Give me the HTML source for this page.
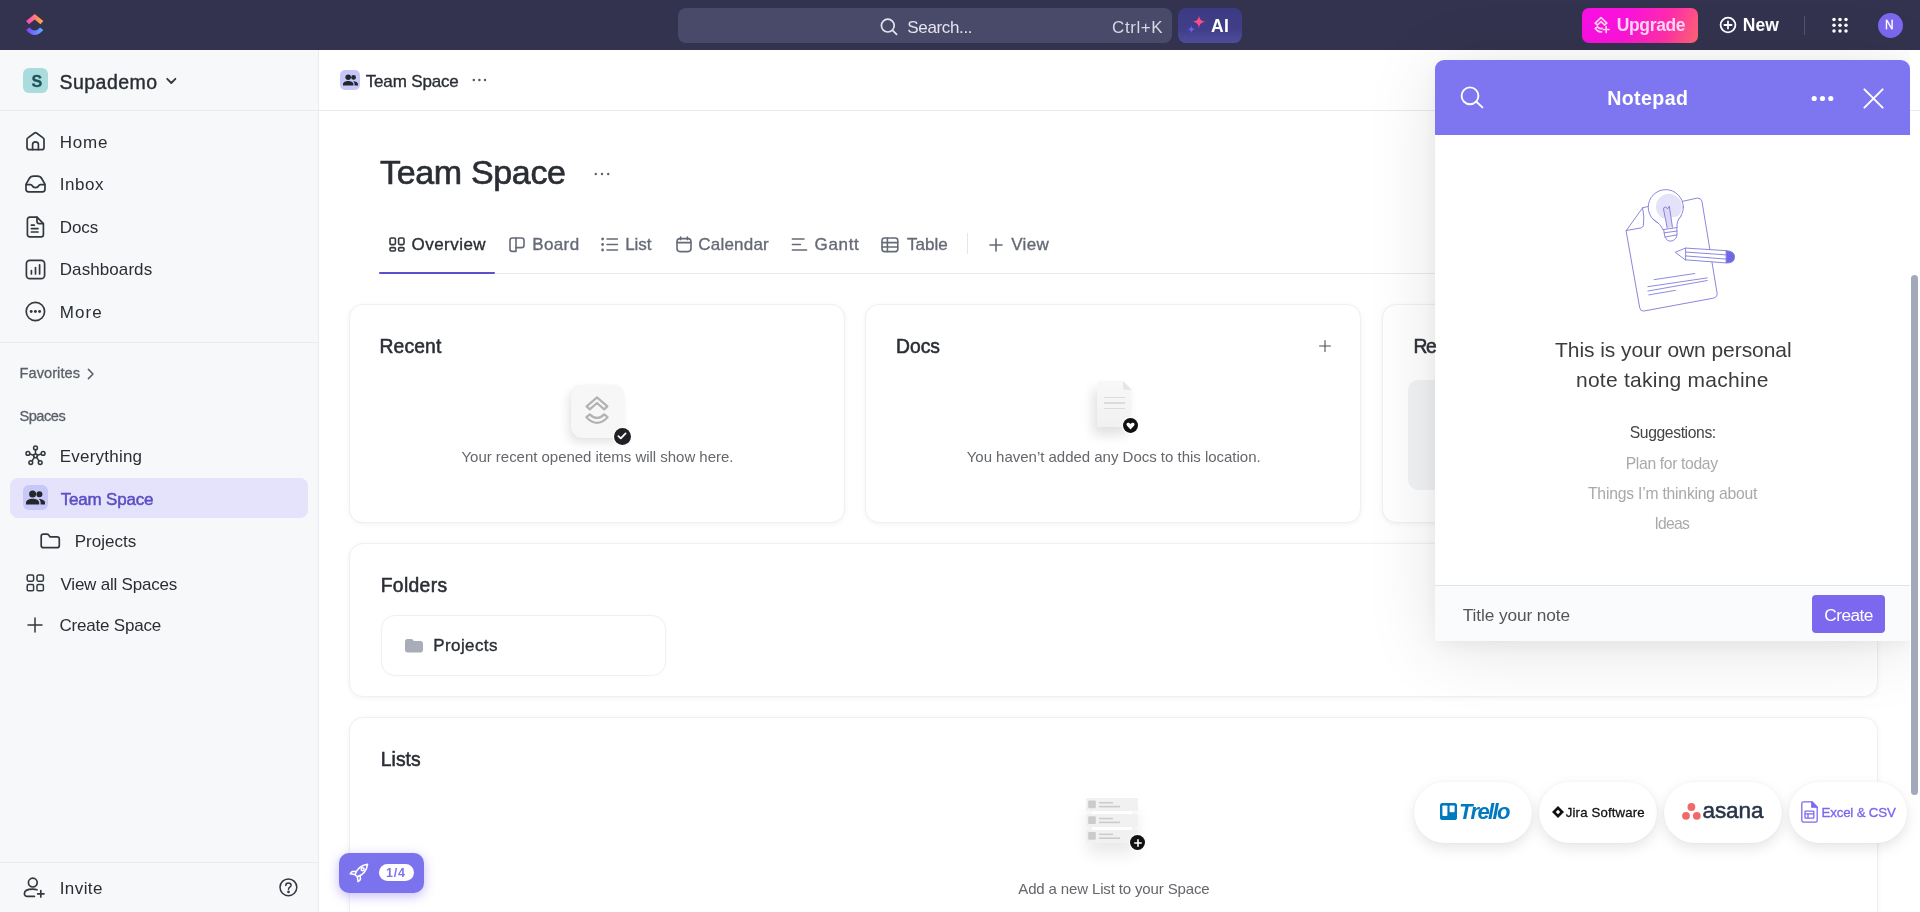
<!DOCTYPE html>
<html lang="en"><head><meta charset="utf-8"><title>Team Space</title>
<style>
*{box-sizing:border-box}
html,body{margin:0;padding:0}
body{width:1920px;height:912px;overflow:hidden;position:relative;background:#fff;font-family:"Liberation Sans",sans-serif;}
.a{position:absolute}
.t{position:absolute;line-height:1;white-space:nowrap}
svg{position:absolute;overflow:visible}
.ic{fill:none;stroke:#33373e;stroke-width:1.7;stroke-linecap:round;stroke-linejoin:round}
.ig{fill:none;stroke:#646a76;stroke-width:1.6;stroke-linecap:round;stroke-linejoin:round}
.card{position:absolute;background:#fff;border:1px solid #f0f0f2;border-radius:14px;box-shadow:0 1px 5px rgba(0,0,0,.055)}
.pill{position:absolute;top:782px;width:118px;height:61px;border-radius:31px;background:#fff;box-shadow:0 5px 14px rgba(0,0,0,.10),0 0 3px rgba(0,0,0,.04)}
</style></head><body>

<!-- ===== main area base ===== -->
<div class="a" style="left:319px;top:50px;width:1601px;height:862px;background:#fff"></div>
<div class="a" style="left:319px;top:110px;width:1601px;height:1px;background:#e9ebf0"></div>
<div class="a" style="left:379px;top:273px;width:1500px;height:1px;background:#e9ebf0"></div>
<div class="a" style="left:379px;top:271.6px;width:116px;height:2.7px;background:#5b4fd0;border-radius:1px"></div>
<div class="a" style="left:967px;top:233px;width:1px;height:21px;background:#e4e6ea"></div>

<!-- cards -->
<div class="card" style="left:349px;top:304px;width:496px;height:219px"></div>
<div class="card" style="left:865px;top:304px;width:496px;height:219px"></div>
<div class="card" style="left:1382px;top:304px;width:496px;height:219px"></div>
<div class="a" style="left:1408px;top:380px;width:444px;height:110px;background:#f2f3f5;border-radius:10px"></div>
<div class="card" style="left:349px;top:543px;width:1529px;height:154px"></div>
<div class="a" style="left:380.5px;top:614.5px;width:285px;height:61px;border:1px solid #f0f0f2;border-radius:14px;background:#fff;box-shadow:0 0 3px rgba(0,0,0,.025)"></div>
<div class="card" style="left:349px;top:717px;width:1529px;height:260px"></div>

<!-- ===== topbar ===== -->
<div class="a" style="left:0;top:0;width:1920px;height:50px;background:#33334f"></div>
<svg style="left:24px;top:12px" width="22" height="25" viewBox="24 12 22 25">
 <defs>
  <linearGradient id="lg1" x1="0" y1="0" x2="1" y2="0"><stop offset="0" stop-color="#ff3ec8"/><stop offset="1" stop-color="#ffb52e"/></linearGradient>
  <linearGradient id="lg2" x1="0" y1="0" x2="1" y2="0"><stop offset="0" stop-color="#8b3dfc"/><stop offset="1" stop-color="#55b4ff"/></linearGradient>
 </defs>
 <path d="M26.1 20.9 L34.7 14 L43.3 20.9 L40.5 24.2 L34.7 19.4 L28.9 24.2 Z" fill="url(#lg1)"/>
 <path d="M26.1 30 L29.4 27.4 Q34.7 33.6 40 27.4 L43.3 30 Q34.7 40 26.1 30 Z" fill="url(#lg2)"/>
</svg>
<div class="a" style="left:678px;top:8px;width:494px;height:35px;border-radius:8px;background:#49496a"></div>
<svg style="left:880px;top:18px" width="18" height="18" viewBox="0 0 18 18"><circle cx="7.8" cy="7.6" r="6.4" fill="none" stroke="#e4e4ee" stroke-width="1.7"/><path d="M12.6 12.4 L16.6 16.4" stroke="#e4e4ee" stroke-width="1.7" stroke-linecap="round"/></svg>
<div class="a" style="left:1178px;top:8px;width:64px;height:35px;border-radius:8px;background:linear-gradient(180deg,#3c3a82 0%,#403e88 60%,#504c9c 100%)"></div>
<svg style="left:1187px;top:15px" width="20" height="19" viewBox="0 0 20 19">
 <defs><linearGradient id="lg3" x1="0" y1="1" x2="1" y2="0"><stop offset="0" stop-color="#ff3ad0"/><stop offset="1" stop-color="#ff5a4a"/></linearGradient></defs>
 <path d="M12 0.5 C12.6 4.6 14 6 18.6 6.8 C14 7.6 12.6 9 12 13.2 C11.4 9 10 7.6 5.4 6.8 C10 6 11.4 4.6 12 0.5Z" fill="url(#lg3)"/>
 <path d="M4.4 10.5 C4.8 13 5.6 13.8 8.2 14.3 C5.6 14.8 4.8 15.6 4.4 18.2 C4 15.6 3.2 14.8 0.6 14.3 C3.2 13.8 4 13 4.4 10.5Z" fill="#6a5cf0"/>
</svg>
<div class="a" style="left:1582px;top:8px;width:116px;height:35px;border-radius:7px;background:linear-gradient(112deg,#f90fe6 0%,#fb14d8 40%,#ff2fa8 72%,#ff6872 100%)"></div>
<svg style="left:1593px;top:16px" width="18" height="18" viewBox="0 0 18 18" fill="none" stroke="#ffd3f3" stroke-width="1.7" stroke-linecap="round" stroke-linejoin="round">
 <path d="M2.2 7.2 L8 1.6 L13.8 7.2 L11.6 9 L8 5.6 L4.4 9 Z"/>
 <path d="M2.4 12.4 L4.6 10.8 Q6.6 13.6 9 12.2"/><path d="M2.4 12.4 Q5 16.6 8.6 15.8"/>
 <path d="M13.2 10.6 V16.4 M10.3 13.5 H16.1"/>
</svg>
<svg style="left:1719px;top:16px" width="18" height="18" viewBox="0 0 18 18" fill="none" stroke="#fff" stroke-width="1.8" stroke-linecap="round"><circle cx="9" cy="9" r="7.4"/><path d="M9 5.4 V12.6 M5.4 9 H12.6"/></svg>
<div class="a" style="left:1804px;top:16px;width:1px;height:19px;background:#53536e"></div>
<svg style="left:1832px;top:17px" width="16" height="16" viewBox="0 0 16 16" fill="#fff">
 <circle cx="2" cy="2.4" r="1.75"/><circle cx="8" cy="2.4" r="1.75"/><circle cx="14" cy="2.4" r="1.75"/>
 <circle cx="2" cy="8.2" r="1.75"/><circle cx="8" cy="8.2" r="1.75"/><circle cx="14" cy="8.2" r="1.75"/>
 <circle cx="2" cy="14" r="1.75"/><circle cx="8" cy="14" r="1.75"/><circle cx="14" cy="14" r="1.75"/>
</svg>
<div class="a" style="left:1878px;top:12.5px;width:25px;height:25px;border-radius:50%;background:#7b68ee"></div>
<!-- ===== sidebar ===== -->
<div class="a" style="left:0;top:50px;width:319px;height:862px;background:#f7f8fa;border-right:1px solid #e9ebf0"></div>
<div class="a" style="left:0;top:110px;width:318px;height:1px;background:#e9ebf0"></div>
<div class="a" style="left:0;top:342px;width:318px;height:1px;background:#e9ebf0"></div>
<div class="a" style="left:0;top:862px;width:318px;height:1px;background:#e9ebf0"></div>
<div class="a" style="left:23px;top:68px;width:25px;height:25px;border-radius:6px;background:#aadcde"></div>
<svg style="left:165.5px;top:77px;stroke-width:1.8;" width="11" height="9" viewBox="0 0 11 9" class="ic"><path d="M1.2 1.8 L5.3 6 L9.4 1.8"/></svg>
<!-- home -->
<svg style="left:25px;top:131px" width="21" height="21" viewBox="0 0 21 21" class="ic"><path d="M2 8.6 C2 7.9 2.3 7.3 2.9 6.9 L9.2 2.2 C10 1.6 11 1.6 11.8 2.2 L18.1 6.9 C18.7 7.3 19 7.9 19 8.6 V16.4 C19 17.7 18 18.7 16.7 18.7 H4.3 C3 18.7 2 17.7 2 16.4 Z"/><path d="M7.6 18.6 V13.6 C7.6 12 8.9 10.8 10.5 10.8 C12.1 10.8 13.4 12 13.4 13.6 V18.6"/></svg>
<!-- inbox -->
<svg style="left:25px;top:175px" width="21" height="18" viewBox="0 0 21 18" class="ic"><path d="M1 10.4 C1 9.6 1.2 8.8 1.7 8.1 L4 4 C5 2.2 6.6 1.2 8.6 1.2 H12.4 C14.4 1.2 16 2.2 17 4 L19.3 8.1 C19.8 8.8 20 9.6 20 10.4 V14.2 C20 15.6 18.9 16.8 17.4 16.8 H3.6 C2.1 16.8 1 15.6 1 14.2 Z"/><path d="M1.2 9.6 H5.6 C6.4 9.6 6.9 10 7.2 10.7 C7.7 11.9 8.9 12.7 10.5 12.7 C12.1 12.7 13.3 11.9 13.8 10.7 C14.1 10 14.6 9.6 15.4 9.6 H19.8"/></svg>
<!-- docs -->
<svg style="left:26px;top:216px" width="19" height="22" viewBox="0 0 19 22" class="ic"><path d="M1.4 3.6 C1.4 2.3 2.4 1.2 3.8 1.2 H11 L17.4 7.6 V18.4 C17.4 19.7 16.4 20.8 15 20.8 H3.8 C2.4 20.8 1.4 19.7 1.4 18.4 Z"/><path d="M11 1.4 V5.4 C11 6.6 11.9 7.6 13.2 7.6 H17.2"/><path d="M5.4 9.2 H8.2 M5.4 12.6 H12 M5.4 16 H12"/></svg>
<!-- dashboards -->
<svg style="left:25px;top:259px" width="21" height="21" viewBox="0 0 21 21" class="ic"><rect x="1.4" y="1.4" width="18.2" height="18.2" rx="3.4"/><path d="M6.4 15 V11.6 M10.5 15 V8.6 M14.6 15 V5.8"/></svg>
<!-- more -->
<svg style="left:25px;top:301px" width="21" height="21" viewBox="0 0 21 21"><circle cx="10.4" cy="10.5" r="9.2" class="ic"/><circle cx="6.2" cy="10.5" r="1.45" fill="#33373e"/><circle cx="10.4" cy="10.5" r="1.45" fill="#33373e"/><circle cx="14.6" cy="10.5" r="1.45" fill="#33373e"/></svg>
<!-- favorites chevron -->
<svg style="left:87px;top:368px" width="8" height="12" viewBox="0 0 8 12" fill="none" stroke="#5a6068" stroke-width="1.5" stroke-linecap="round" stroke-linejoin="round"><path d="M1.4 1.4 L6 6 L1.4 10.6"/></svg>
<!-- everything -->
<svg style="left:25px;top:445px;stroke-width:1.5;" width="21" height="21" viewBox="0 0 21 21" class="ic"><circle cx="10.5" cy="10.8" r="1.9"/><circle cx="10.5" cy="2.9" r="1.9"/><circle cx="2.9" cy="8.4" r="1.9"/><circle cx="18.1" cy="8.4" r="1.9"/><circle cx="5.8" cy="17.6" r="1.9"/><circle cx="15.2" cy="17.6" r="1.9"/><path d="M10.5 4.8 V8.9 M4.7 9 L8.7 10.2 M16.3 9 L12.3 10.2 M6.9 16 L9.4 12.4 M14.1 16 L11.6 12.4"/></svg>
<!-- team space active -->
<div class="a" style="left:10px;top:478px;width:298px;height:40px;border-radius:8px;background:#e5e3fb"></div>
<div class="a" style="left:23px;top:485px;width:25px;height:25px;border-radius:6px;background:#c8c8f8"></div>
<svg style="left:26px;top:490px" width="19" height="15" viewBox="0 0 19 15" fill="#23262b"><circle cx="6.6" cy="3.9" r="3.5"/><path d="M0 14.6 V12.6 C0 10 3.6 8.7 6.6 8.7 C9.6 8.7 13.2 10 13.2 12.6 V14.6 Z"/><circle cx="13.4" cy="4.3" r="3"/><path d="M14.6 14.6 V12.4 C14.6 10.9 13.8 9.8 12.7 9 C15.6 8.9 19 10.2 19 12.6 V14.6 Z"/></svg>
<!-- projects folder -->
<svg style="left:40px;top:533px" width="21" height="16" viewBox="0 0 21 16" class="ic"><path d="M1.2 3.4 C1.2 2.2 2.2 1.2 3.4 1.2 H7 C7.7 1.2 8.3 1.5 8.7 2.1 L9.9 3.8 H17 C18.3 3.8 19.3 4.8 19.3 6 V12.4 C19.3 13.7 18.3 14.7 17 14.7 H3.4 C2.2 14.7 1.2 13.7 1.2 12.4 Z"/></svg>
<!-- view all spaces -->
<svg style="left:26px;top:574px;stroke-width:1.5;" width="19" height="18" viewBox="0 0 19 18" class="ic"><rect x="1.2" y="1" width="6.4" height="6.2" rx="1.4"/><rect x="11" y="1" width="6.4" height="6.2" rx="1.4"/><rect x="1.2" y="10.6" width="6.4" height="6.2" rx="1.4"/><rect x="11" y="10.6" width="6.4" height="6.2" rx="1.4"/></svg>
<!-- plus -->
<svg style="left:27px;top:617px;stroke-width:1.5;" width="16" height="16" viewBox="0 0 16 16" class="ic"><path d="M8 1 V15 M1 8 H15"/></svg>
<!-- invite -->
<svg style="left:23px;top:877px" width="23" height="21" viewBox="0 0 23 21" class="ic"><circle cx="9.8" cy="5.6" r="4.4"/><path d="M11.4 19.4 H4.2 C2.6 19.4 1.4 18.2 1.4 16.8 C1.4 13.8 4.4 12.2 9.8 12.2 C11.4 12.2 12.8 12.4 14 12.8"/><path d="M17.8 13.6 V20 M14.6 16.8 H21"/></svg>
<!-- help -->
<svg style="left:279px;top:878px;stroke-width:1.5;" width="19" height="19" viewBox="0 0 19 19" class="ic"><circle cx="9.4" cy="9.3" r="8.4"/><path d="M6.8 7.4 C6.8 5.9 8 4.9 9.5 4.9 C11 4.9 12.1 5.9 12.1 7.2 C12.1 9.2 9.5 9.2 9.5 11.2"/><circle cx="9.5" cy="13.9" r="0.6" fill="#2a2e34"/></svg>
<!-- ===== main: breadcrumb, tabs icons ===== -->
<div class="a" style="left:340px;top:70px;width:20px;height:20px;border-radius:5px;background:#c6c7f8"></div>
<svg style="left:342.5px;top:74px" width="15" height="12" viewBox="0 0 19 15" fill="#23262b"><circle cx="6.6" cy="3.9" r="3.5"/><path d="M0 14.6 V12.6 C0 10 3.6 8.7 6.6 8.7 C9.6 8.7 13.2 10 13.2 12.6 V14.6 Z"/><circle cx="13.4" cy="4.3" r="3"/><path d="M14.6 14.6 V12.4 C14.6 10.9 13.8 9.8 12.7 9 C15.6 8.9 19 10.2 19 12.6 V14.6 Z"/></svg>
<svg style="left:472px;top:78px" width="15" height="4" viewBox="0 0 15 4" fill="#4f545c"><circle cx="1.8" cy="2" r="1.2"/><circle cx="7.4" cy="2" r="1.2"/><circle cx="13" cy="2" r="1.2"/></svg>
<svg style="left:594px;top:172px" width="16" height="4" viewBox="0 0 16 4" fill="#5a5f68"><circle cx="1.8" cy="2" r="1.2"/><circle cx="8" cy="2" r="1.2"/><circle cx="14.2" cy="2" r="1.2"/></svg>
<!-- overview -->
<svg style="left:389px;top:237px;stroke-width:1.6;" width="16" height="15" viewBox="0 0 16 15" class="ic"><rect x="1" y="1" width="5.4" height="6.6" rx="1.3"/><rect x="9.6" y="1" width="5.4" height="6.6" rx="1.3"/><rect x="1" y="10.6" width="5.4" height="3.4" rx="1.2"/><rect x="9.6" y="10.6" width="5.4" height="3.4" rx="1.2"/></svg>
<!-- board -->
<svg style="left:509px;top:237px" width="16" height="16" viewBox="0 0 16 16" class="ig"><path d="M7 1 H3.4 C2.1 1 1 2.1 1 3.4 V12 C1 13.3 2.1 14.4 3.4 14.4 H7 Z"/><path d="M7 1 H12.6 C13.9 1 15 2.1 15 3.4 V8.2 C15 9.5 13.9 10.6 12.6 10.6 H7"/></svg>
<!-- list -->
<svg style="left:601px;top:237px" width="18" height="15" viewBox="0 0 18 15" class="ig"><path d="M6 2 H16.4 M6 7.5 H16.4 M6 13 H16.4"/><circle cx="1.6" cy="2" r=".6" fill="#646a76"/><circle cx="1.6" cy="7.5" r=".6" fill="#646a76"/><circle cx="1.6" cy="13" r=".6" fill="#646a76"/></svg>
<!-- calendar -->
<svg style="left:676px;top:236px" width="16" height="17" viewBox="0 0 16 17" class="ig"><rect x="1" y="2.6" width="14" height="13" rx="3"/><path d="M1.2 6.6 H14.8 M4.6 1 V3.6 M11.4 1 V3.6"/></svg>
<!-- gantt -->
<svg style="left:791px;top:237px" width="17" height="15" viewBox="0 0 17 15" class="ig"><path d="M1.4 2 H13 M1.4 7.5 H9.4 M1.4 13 H15.6"/></svg>
<!-- table -->
<svg style="left:881px;top:237px" width="18" height="16" viewBox="0 0 18 16" class="ig"><rect x="1" y="1" width="15.8" height="13.6" rx="2.6"/><path d="M1.2 5.6 H16.6 M1.2 10 H16.6 M6.4 1.2 V14.4"/></svg>
<!-- +view -->
<svg style="left:989px;top:238px" width="14" height="14" viewBox="0 0 14 14" class="ig"><path d="M7 1 V13 M1 7 H13"/></svg>
<!-- docs + -->
<svg style="left:1319px;top:340px;stroke-width:1.1;stroke:#4a4e55;" width="12" height="12" viewBox="0 0 12 12" class="ic"><path d="M6 .6 V11.4 M.6 6 H11.4"/></svg>

<!-- recent tile -->
<div class="a" style="left:571px;top:385px;width:53px;height:53px;border-radius:11px;background:#f7f7f8;box-shadow:-3px 5px 10px rgba(0,0,0,.10),0 0 2px rgba(0,0,0,.05)"></div>
<svg style="left:585px;top:396px" width="24" height="29" viewBox="0 0 24 29" fill="none" stroke="#b3b3b5" stroke-width="2.2" stroke-linejoin="round" stroke-linecap="round"><path d="M1.6 10.4 L12 1.4 L22.4 10.4 L19.2 13.4 L12 7 L4.8 13.4 Z"/><path d="M1.4 21.2 L4.8 18.4 Q12 25.6 19.2 18.4 L22.6 21.2 Q12 32.4 1.4 21.2 Z"/></svg>
<div class="a" style="left:613.5px;top:427.5px;width:17px;height:17px;border-radius:50%;background:#1f2125;box-shadow:0 0 0 1px #fff"></div>
<svg style="left:617px;top:432px" width="10" height="8" viewBox="0 0 10 8" fill="none" stroke="#fff" stroke-width="1.8" stroke-linecap="round" stroke-linejoin="round"><path d="M1.4 4.2 L3.8 6.4 L8.6 1.4"/></svg>

<!-- docs empty icon -->
<div class="a" style="left:1097px;top:380.5px;width:34px;height:46px;border-radius:3px;background:linear-gradient(180deg,#f8f8f8,#f1f1f2);box-shadow:-4px 8px 12px rgba(0,0,0,.12)"></div>
<svg style="left:1123px;top:380.5px" width="9" height="9" viewBox="0 0 9 9"><path d="M0 0 H9 V9 Z" fill="#fff"/><path d="M0 0 V7 C0 8 1 9 2 9 H9 Z" fill="#e6e6e8"/></svg>
<div class="a" style="left:1104px;top:397px;width:21px;height:1.4px;background:#dcdcde"></div>
<div class="a" style="left:1104px;top:402.4px;width:21px;height:1.4px;background:#dcdcde"></div>
<div class="a" style="left:1104px;top:407.8px;width:21px;height:1.4px;background:#dcdcde"></div>
<div class="a" style="left:1123px;top:418.3px;width:14.8px;height:14.8px;border-radius:50%;background:#111;box-shadow:0 0 0 1px #fff"></div>
<svg style="left:1126px;top:422.4px" width="9" height="8" viewBox="0 0 9 8"><path d="M4.5 7.4 L1 3.8 C0 2.6 0.4 .8 2.2 .8 C3.2 .8 4 1.4 4.5 2.2 C5 1.4 5.8 .8 6.8 .8 C8.6 .8 9 2.6 8 3.8 Z" fill="#fff"/></svg>

<!-- folder tile icon -->
<svg style="left:405px;top:638.5px" width="18" height="14" viewBox="0 0 18 14"><path d="M0 2.4 C0 1.1 1 0 2.4 0 H6.2 C6.9 0 7.5 .3 7.9 .8 L8.8 2 H15.6 C16.9 2 18 3.1 18 4.4 V11 C18 12.3 16.9 13.4 15.6 13.4 H2.4 C1 13.4 0 12.3 0 11 Z" fill="#a9adb9"/></svg>

<!-- lists empty -->
<div class="a" style="left:1092px;top:806px;width:40px;height:34px;background:#fff;box-shadow:0 10px 16px 4px rgba(0,0,0,.085)"></div>
<div class="a" style="left:1086px;top:798.3px;width:51.5px;height:12.6px;background:#f1f1f2;border-radius:1.5px"></div>
<div class="a" style="left:1086px;top:814.2px;width:51.5px;height:12.6px;background:#f1f1f2;border-radius:1.5px"></div>
<div class="a" style="left:1086px;top:830px;width:51.5px;height:12.6px;background:#f1f1f2;border-radius:1.5px"></div>
<svg style="left:1086px;top:798px" width="52" height="45" viewBox="0 0 52 45" fill="#cbcbcd">
 <rect x="2.2" y="2.4" width="7.6" height="7.8" rx="1"/><rect x="13" y="4" width="14" height="1.5"/><rect x="13" y="7.8" width="21" height="1.6"/>
 <rect x="2.2" y="18.2" width="7.6" height="7.8" rx="1"/><rect x="13" y="19.8" width="14" height="1.5"/><rect x="13" y="23.6" width="21" height="1.6"/>
 <rect x="2.2" y="34" width="7.6" height="7.8" rx="1"/><rect x="13" y="35.6" width="14" height="1.5"/><rect x="13" y="39.4" width="21" height="1.6"/>
</svg>
<div class="a" style="left:1130px;top:835px;width:15px;height:15px;border-radius:50%;background:#111;box-shadow:0 0 0 1px #fff"></div>
<svg style="left:1133.5px;top:838.5px" width="8" height="8" viewBox="0 0 8 8" stroke="#fff" stroke-width="1.6" stroke-linecap="round"><path d="M4 .8 V7.2 M.8 4 H7.2"/></svg>

<!-- rocket button -->
<div class="a" style="left:339px;top:853px;width:85px;height:39.5px;border-radius:10px;background:#7b73ee;box-shadow:0 3px 12px rgba(123,104,238,.45)"></div>
<svg style="left:349px;top:862px" width="21" height="21" viewBox="0 0 21 21" fill="none" stroke="#fff" stroke-width="1.5" stroke-linecap="round" stroke-linejoin="round"><path d="M8.2 14.8 L6 12.6 C7.4 8 11 3.4 18.6 2.2 C17.6 9.8 13 13.4 8.2 14.8 Z"/><circle cx="13.6" cy="7.2" r="1.5"/><path d="M7.2 9.6 L3.2 9.4 L1.2 11.8 L5.6 12.4"/><path d="M11.2 13.8 L11.4 17.6 L9 19.6 L8.4 15.2"/></svg>
<div class="a" style="left:378.8px;top:864.2px;width:35.6px;height:17.2px;border-radius:9px;background:#fff"></div>

<!-- ===== notepad ===== -->
<div class="a" style="left:1435px;top:60px;width:475px;height:581px;border-radius:9px 9px 3px 3px;background:#fff;box-shadow:0 8px 70px rgba(0,0,0,.115),0 5px 14px rgba(0,0,0,.04)"></div>
<div class="a" style="left:1435px;top:60px;width:475px;height:74.5px;border-radius:9px 9px 0 0;background:#7e76f0"></div>
<div class="a" style="left:1435px;top:585px;width:475px;height:56px;background:#fafbfc;border-top:1px solid #e3e4e6;border-radius:0 0 3px 3px"></div>
<div class="a" style="left:1812px;top:594.5px;width:73px;height:38.5px;border-radius:4px;background:#7b68ee"></div>
<svg style="left:1460px;top:86px" width="24" height="23" viewBox="0 0 24 23" fill="none" stroke="#fff" stroke-width="1.9" stroke-linecap="round"><circle cx="10" cy="9.8" r="8.4"/><path d="M16.4 15.8 L22.4 21.4"/></svg>
<svg style="left:1811px;top:94.5px" width="23" height="7" viewBox="0 0 23 7" fill="#fff"><circle cx="3.2" cy="3.5" r="2.6"/><circle cx="11.5" cy="3.5" r="2.6"/><circle cx="19.8" cy="3.5" r="2.6"/></svg>
<svg style="left:1862.5px;top:87.5px" width="21" height="21" viewBox="0 0 21 21" fill="none" stroke="#fff" stroke-width="2" stroke-linecap="round"><path d="M1.4 1.4 L19.6 19.6 M19.6 1.4 L1.4 19.6"/></svg>
<!-- illustration -->
<svg style="left:1590px;top:170px" width="180" height="160" viewBox="0 0 1026 912" fill="none" stroke="#7f7ada" stroke-width="5.2" stroke-linecap="round" stroke-linejoin="round">
 <path d="M207 345 L300 215 L340 206 L530 178 L612 160 Q632 158 638 178 L724 700 Q728 722 706 730 L306 804 Q288 806 284 788 Z" fill="#fff"/>
 <path d="M300 215 Q312 270 304 318 Q300 328 290 330 L207 345"/>
 <circle cx="432" cy="212" r="100" fill="#fff"/>
 <circle cx="450" cy="210" r="74" fill="#e4e2f8" stroke="none"/>
 <path d="M362 282 Q405 310 415 340 L497 328 Q490 290 520 262" fill="#fff"/>
 <path d="M420 340 L426 378 Q440 412 468 404 Q496 394 496 366 L495 330 M423 358 L496 348 M428 382 L494 370"/>
 <path d="M440 330 L418 218 L432 210 L442 222 L452 206 L470 326" fill="#dcd9f6"/>
 <path d="M488 468 L545 445 L780 460 L778 530 L545 512 Z" fill="#fff"/>
 <path d="M545 445 L545 512 M548 468 L778 484 M548 490 L778 508"/>
 <path d="M778 460 Q826 462 824 498 Q822 532 778 530 Z" fill="#6f67e8"/>
 <path d="M365 625 L597 590 M330 665 L668 615 M330 690 L668 630 M335 712 L487 686" stroke-width="5"/>
</svg>
<!-- page scrollbar -->
<div class="a" style="left:1910px;top:50px;width:10px;height:862px;background:#fff"></div>
<div class="a" style="left:1910px;top:110px;width:10px;height:1px;background:#e9ebf0"></div>
<div class="a" style="left:1910.5px;top:275px;width:7px;height:520px;border-radius:4px;background:#a4a9ba"></div>
<!-- import pills -->
<div class="pill" style="left:1414px"></div><div class="pill" style="left:1539px"></div><div class="pill" style="left:1664px"></div><div class="pill" style="left:1789px"></div>
<svg style="left:1440px;top:803px" width="17" height="17" viewBox="0 0 17 17"><rect x="0" y="0" width="17" height="17" rx="2.6" fill="#0079bf"/><rect x="2.4" y="2.4" width="5" height="10.6" rx=".9" fill="#fff"/><rect x="9.6" y="2.4" width="5" height="6.8" rx=".9" fill="#fff"/></svg>
<svg style="left:1551.5px;top:806px" width="12" height="12" viewBox="0 0 12 12"><path d="M6 0 L12 6 L6 12 L0 6 Z" fill="#111"/><path d="M6 3.8 L8.2 6 L6 8.2 L3.8 6 Z" fill="#fff"/></svg>
<svg style="left:1681.5px;top:803px" width="19" height="17" viewBox="0 0 19 17" fill="#f06a6a"><circle cx="9.4" cy="4" r="3.9"/><circle cx="4" cy="12.8" r="3.9"/><circle cx="14.8" cy="12.8" r="3.9"/></svg>
<svg style="left:1801px;top:800.5px" width="17" height="22" viewBox="0 0 17 22" fill="none" stroke="#7b68ee" stroke-width="1.3" stroke-linejoin="round"><path d="M.8 2.6 C.8 1.6 1.6 .8 2.6 .8 H10.8 L16.2 6.2 V19.4 C16.2 20.4 15.4 21.2 14.4 21.2 H2.6 C1.6 21.2 .8 20.4 .8 19.4 Z"/><path d="M10.8 .8 V6.2 H16.2 Z" fill="#7b68ee"/><rect x="4" y="10.2" width="8.8" height="7" rx=".6"/><path d="M4 12.8 H12.8 M7 12.8 V17.2"/></svg>



<div id="textwrap" style="position:absolute;left:0;top:0;width:1920px;height:912px;will-change:transform">
<span class="t" style="left:907.30px;top:18.51px;font-size:17px;color:#e4e4ee;letter-spacing:-0.350px;">Search...</span>
<span class="t" style="left:1112.00px;top:18.51px;font-size:17px;color:#d8d8e4;letter-spacing:0.600px;">Ctrl+K</span>
<span class="t" style="left:1211.00px;top:18.39px;font-size:17.5px;color:#ffffff;letter-spacing:0.300px;font-weight:700;">AI</span>
<span class="t" style="left:1616.75px;top:17.39px;font-size:17.5px;color:#ffd3f3;letter-spacing:-0.358px;font-weight:700;">Upgrade</span>
<span class="t" style="left:1742.75px;top:17.39px;font-size:17.5px;color:#ffffff;letter-spacing:0.125px;font-weight:700;">New</span>
<span class="t" style="left:1885.00px;top:19.34px;font-size:12px;color:#ffffff;letter-spacing:2.000px;-webkit-text-stroke:0.3px #ffffff;">N</span>
<span class="t" style="left:31.40px;top:72.59px;font-size:16.2px;color:#1f5257;letter-spacing:-3.000px;font-weight:700;-webkit-text-stroke:0.3px #1f5257;">S</span>
<span class="t" style="left:59.50px;top:72.69px;font-size:19.5px;color:#2a2e34;letter-spacing:0.464px;-webkit-text-stroke:0.4px #2a2e34;">Supademo</span>
<span class="t" style="left:59.75px;top:133.61px;font-size:17px;color:#2a2e34;letter-spacing:0.750px;">Home</span>
<span class="t" style="left:59.75px;top:176.11px;font-size:17px;color:#2a2e34;letter-spacing:0.562px;">Inbox</span>
<span class="t" style="left:59.75px;top:218.61px;font-size:17px;color:#2a2e34;letter-spacing:-0.083px;">Docs</span>
<span class="t" style="left:59.75px;top:261.11px;font-size:17px;color:#2a2e34;letter-spacing:0.083px;">Dashboards</span>
<span class="t" style="left:59.75px;top:303.61px;font-size:17px;color:#2a2e34;letter-spacing:1.083px;">More</span>
<span class="t" style="left:19.50px;top:365.64px;font-size:14.6px;color:#5a6068;letter-spacing:0.062px;-webkit-text-stroke:0.3px #5a6068;">Favorites</span>
<span class="t" style="left:19.50px;top:408.64px;font-size:14.6px;color:#5a6068;letter-spacing:-0.500px;-webkit-text-stroke:0.3px #5a6068;">Spaces</span>
<span class="t" style="left:59.75px;top:448.11px;font-size:17px;color:#2a2e34;letter-spacing:0.222px;">Everything</span>
<span class="t" style="left:60.75px;top:490.61px;font-size:17px;color:#5b4ec4;letter-spacing:-0.194px;-webkit-text-stroke:0.5px #5b4ec4;">Team Space</span>
<span class="t" style="left:74.75px;top:532.61px;font-size:17px;color:#2a2e34;letter-spacing:0.000px;">Projects</span>
<span class="t" style="left:60.50px;top:575.61px;font-size:17px;color:#2a2e34;letter-spacing:-0.214px;">View all Spaces</span>
<span class="t" style="left:59.50px;top:617.36px;font-size:17px;color:#2a2e34;letter-spacing:-0.205px;">Create Space</span>
<span class="t" style="left:59.75px;top:880.11px;font-size:17px;color:#2a2e34;letter-spacing:0.400px;">Invite</span>
<span class="t" style="left:365.75px;top:72.61px;font-size:17px;color:#2a2e34;letter-spacing:-0.167px;-webkit-text-stroke:0.35px #2a2e34;">Team Space</span>
<span class="t" style="left:380.00px;top:154.62px;font-size:34px;color:#2a2e34;letter-spacing:-0.333px;-webkit-text-stroke:0.65px #2a2e34;">Team Space</span>
<span class="t" style="left:411.50px;top:236.36px;font-size:17px;color:#2a2e34;letter-spacing:0.464px;-webkit-text-stroke:0.35px #2a2e34;">Overview</span>
<span class="t" style="left:532.25px;top:236.36px;font-size:17px;color:#646a76;letter-spacing:0.375px;-webkit-text-stroke:0.35px #646a76;">Board</span>
<span class="t" style="left:625.25px;top:236.36px;font-size:17px;color:#646a76;letter-spacing:-0.083px;-webkit-text-stroke:0.35px #646a76;">List</span>
<span class="t" style="left:698.25px;top:236.36px;font-size:17px;color:#646a76;letter-spacing:0.214px;-webkit-text-stroke:0.35px #646a76;">Calendar</span>
<span class="t" style="left:814.50px;top:236.36px;font-size:17px;color:#646a76;letter-spacing:0.688px;-webkit-text-stroke:0.35px #646a76;">Gantt</span>
<span class="t" style="left:907.00px;top:236.36px;font-size:17px;color:#646a76;letter-spacing:0.000px;-webkit-text-stroke:0.35px #646a76;">Table</span>
<span class="t" style="left:1011.25px;top:236.36px;font-size:17px;color:#646a76;letter-spacing:0.333px;-webkit-text-stroke:0.35px #646a76;">View</span>
<span class="t" style="left:379.50px;top:337.06px;font-size:19.3px;color:#2a2e34;letter-spacing:0.150px;-webkit-text-stroke:0.55px #2a2e34;">Recent</span>
<span class="t" style="left:896.00px;top:337.06px;font-size:19.3px;color:#2a2e34;letter-spacing:0.000px;-webkit-text-stroke:0.55px #2a2e34;">Docs</span>
<span class="t" style="left:1413.50px;top:337.06px;font-size:19.3px;color:#2a2e34;letter-spacing:-1.500px;-webkit-text-stroke:0.55px #2a2e34;">Re</span>
<span class="t" style="left:461.50px;top:449.00px;font-size:15px;color:#64676b;letter-spacing:-0.026px;">Your recent opened items will show here.</span>
<span class="t" style="left:966.70px;top:449.00px;font-size:15px;color:#64676b;letter-spacing:-0.016px;">You haven’t added any Docs to this location.</span>
<span class="t" style="left:380.75px;top:576.26px;font-size:19.3px;color:#2a2e34;letter-spacing:0.333px;-webkit-text-stroke:0.55px #2a2e34;">Folders</span>
<span class="t" style="left:433.25px;top:637.36px;font-size:17px;color:#2a2e34;letter-spacing:0.393px;-webkit-text-stroke:0.35px #2a2e34;">Projects</span>
<span class="t" style="left:380.75px;top:750.16px;font-size:19.3px;color:#2a2e34;letter-spacing:0.062px;-webkit-text-stroke:0.55px #2a2e34;">Lists</span>
<span class="t" style="left:1018.30px;top:881.10px;font-size:15px;color:#64676b;letter-spacing:-0.141px;">Add a new List to your Space</span>
<span class="t" style="left:1607.20px;top:89.21px;font-size:19.6px;color:#ffffff;letter-spacing:0.400px;font-weight:700;">Notepad</span>
<span class="t" style="left:1555.00px;top:339.22px;font-size:21px;color:#3c3c3c;letter-spacing:-0.062px;">This is your own personal</span>
<span class="t" style="left:1576.00px;top:369.22px;font-size:21px;color:#3c3c3c;letter-spacing:0.250px;">note taking machine</span>
<span class="t" style="left:1629.75px;top:424.71px;font-size:15.7px;color:#444444;letter-spacing:-0.386px;">Suggestions:</span>
<span class="t" style="left:1625.75px;top:455.71px;font-size:15.7px;color:#a9a9a9;letter-spacing:-0.346px;">Plan for today</span>
<span class="t" style="left:1588.00px;top:485.71px;font-size:15.7px;color:#a9a9a9;letter-spacing:-0.208px;">Things I’m thinking about</span>
<span class="t" style="left:1654.50px;top:516.11px;font-size:15.7px;color:#a9a9a9;letter-spacing:-0.750px;">Ideas</span>
<span class="t" style="left:1462.80px;top:607.36px;font-size:17.3px;color:#555555;letter-spacing:-0.107px;">Title your note</span>
<span class="t" style="left:1824.20px;top:607.36px;font-size:17.3px;color:#ffffff;letter-spacing:-0.520px;">Create</span>
<span class="t" style="left:386.00px;top:866.92px;font-size:12.5px;color:#7b73ee;letter-spacing:0.750px;font-weight:700;">1/4</span>
<span class="t" style="left:1565.80px;top:805.83px;font-size:13.2px;color:#111111;letter-spacing:0.150px;-webkit-text-stroke:0.3px #111111;">Jira Software</span>
<span class="t" style="left:1702.40px;top:799.95px;font-size:22.5px;color:#273347;letter-spacing:-0.025px;-webkit-text-stroke:0.5px #273347;">asana</span>
<span class="t" style="left:1821.50px;top:806.44px;font-size:13.3px;color:#7b68ee;letter-spacing:-0.180px;-webkit-text-stroke:0.35px #7b68ee;">Excel &amp; CSV</span>
<span class="t" style="left:1459.00px;top:801.38px;font-size:22px;color:#0079bf;letter-spacing:-1.600px;font-weight:700;font-style:italic;">Trello</span>
</div>
</body></html>
